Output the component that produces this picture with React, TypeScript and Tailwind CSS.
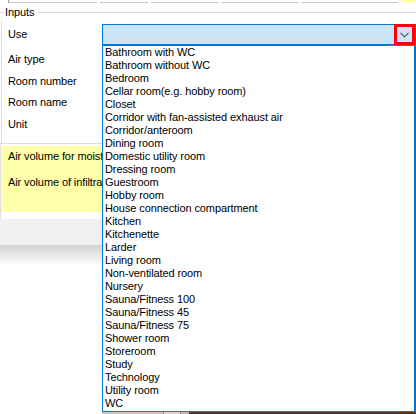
import React from "react";

const items = [
  "Bathroom with WC",
  "Bathroom without WC",
  "Bedroom",
  "Cellar room(e.g. hobby room)",
  "Closet",
  "Corridor with fan-assisted exhaust air",
  "Corridor/anteroom",
  "Dining room",
  "Domestic utility room",
  "Dressing room",
  "Guestroom",
  "Hobby room",
  "House connection compartment",
  "Kitchen",
  "Kitchenette",
  "Larder",
  "Living room",
  "Non-ventilated room",
  "Nursery",
  "Sauna/Fitness 100",
  "Sauna/Fitness 45",
  "Sauna/Fitness 75",
  "Shower room",
  "Storeroom",
  "Study",
  "Technology",
  "Utility room",
  "WC",
];

export default function App() {
  return (
    <div
      className="relative w-[416px] h-[414px] overflow-hidden bg-white text-black text-[11px] tracking-[-0.1px]"
      style={{ fontFamily: '"Liberation Sans", Arial, sans-serif' }}
    >
      {/* top strip: bottoms of fields above */}
      <div className="flex h-[3px] pl-[8px] gap-[3px]">
        <div className="w-[89px] border-l border-b border-[#7a9cc8] border-b-[#c8c8c8]" />
        <div className="w-[48px] border-b border-[#c8c8c8]" />
        <div className="w-[67px] border-b border-[#c8c8c8]" />
        <div className="w-[77px] border-b border-[#c8c8c8]" />
        <div className="w-[97px] border-b border-[#c8c8c8]" />
        <div className="flex-1 bg-[#ffffb0]" />
      </div>

      {/* group box */}
      <div className="relative">
        <div className="flex items-center h-[16px] mt-[1px]">
          <div className="w-[4px] h-px bg-[#dcdcdc]" />
          <span className="px-[1px] leading-[13px]">Inputs</span>
          <div className="flex-1 h-px bg-[#dcdcdc] ml-[2px]" />
        </div>
        <div className="flex flex-col border-l border-[#dcdcdc] ml-[1px] pl-[6px]">
          <div className="h-[4px]" />
          <div className="h-[21px] flex items-center">Use</div>
          <div className="h-[3px]" />
          <div className="h-[22px] flex items-center">Air type</div>
          <div className="h-[22px] flex items-center">Room number</div>
          <div className="h-[21px] flex items-center">Room name</div>
          <div className="h-[22px] flex items-center">Unit</div>
        </div>
        <div className="h-[8px] border-l border-[#dcdcdc] ml-[1px]" />
      </div>

      {/* yellow results */}
      <div className="h-px bg-[#dcdcdc]" />
      <div className="h-[2px] border-l border-[#dcdcdc]" />
      <div className="h-[66px] bg-[#ffffaa] border-l border-[#e0e0e0] pl-[7px] pt-[4px] flex flex-col gap-[13px]">
        <div className="w-[94px] overflow-hidden h-[13px] leading-[13px] whitespace-nowrap">Air volume for moisture protection</div>
        <div className="w-[94px] overflow-hidden h-[13px] leading-[13px] whitespace-nowrap">Air volume of infiltration</div>
      </div>
      <div className="h-[7px] bg-white border-l border-[#e0e0e0]" />
      <div className="h-[26px] bg-[#f0f0f0]" />
      <div className="h-[20px] bg-gradient-to-b from-[#d2d2d2] to-white" />

      {/* combo box overlay */}
      <div className="absolute left-[102px] top-[24px] w-[313px] h-[21px] bg-[#cce4f7] border border-[#0078d7]">
        <div className="absolute right-[-1px] top-[-1px] w-[21px] h-[21px] border-[3px] border-[#ff0000] flex items-center justify-center">
          <svg width="9" height="6" viewBox="0 0 9 6">
            <path d="M0.5 0.8 L4.5 4.8 L8.5 0.8" stroke="#505050" strokeWidth="1.1" fill="none" />
          </svg>
        </div>
      </div>

      {/* dropdown list overlay */}
      <div className="absolute left-[102px] top-[45px] w-[313px] h-[367px] bg-white border border-[#0078d7] pl-[2px]">
        {items.map((it) => (
          <div key={it} className="h-[13px] leading-[13px] whitespace-nowrap">
            {it}
          </div>
        ))}
      </div>
      <div className="absolute left-[415px] top-[24px] w-px h-[388px] bg-[#5a5a5a]" />
      <div className="absolute left-[102px] top-[412px] w-[314px] h-[2px] flex">
        <div className="w-[61px] bg-[#c8c8c8]" />
        <div className="w-[1px] bg-[#888]" />
        <div className="w-[16px] bg-[#d8d8d8]" />
        <div className="w-[1px] bg-[#888]" />
        <div className="w-[8px] bg-[#bbb]" />
        <div className="flex-1 bg-[#3c3c3c]" />
      </div>
    </div>
  );
}
